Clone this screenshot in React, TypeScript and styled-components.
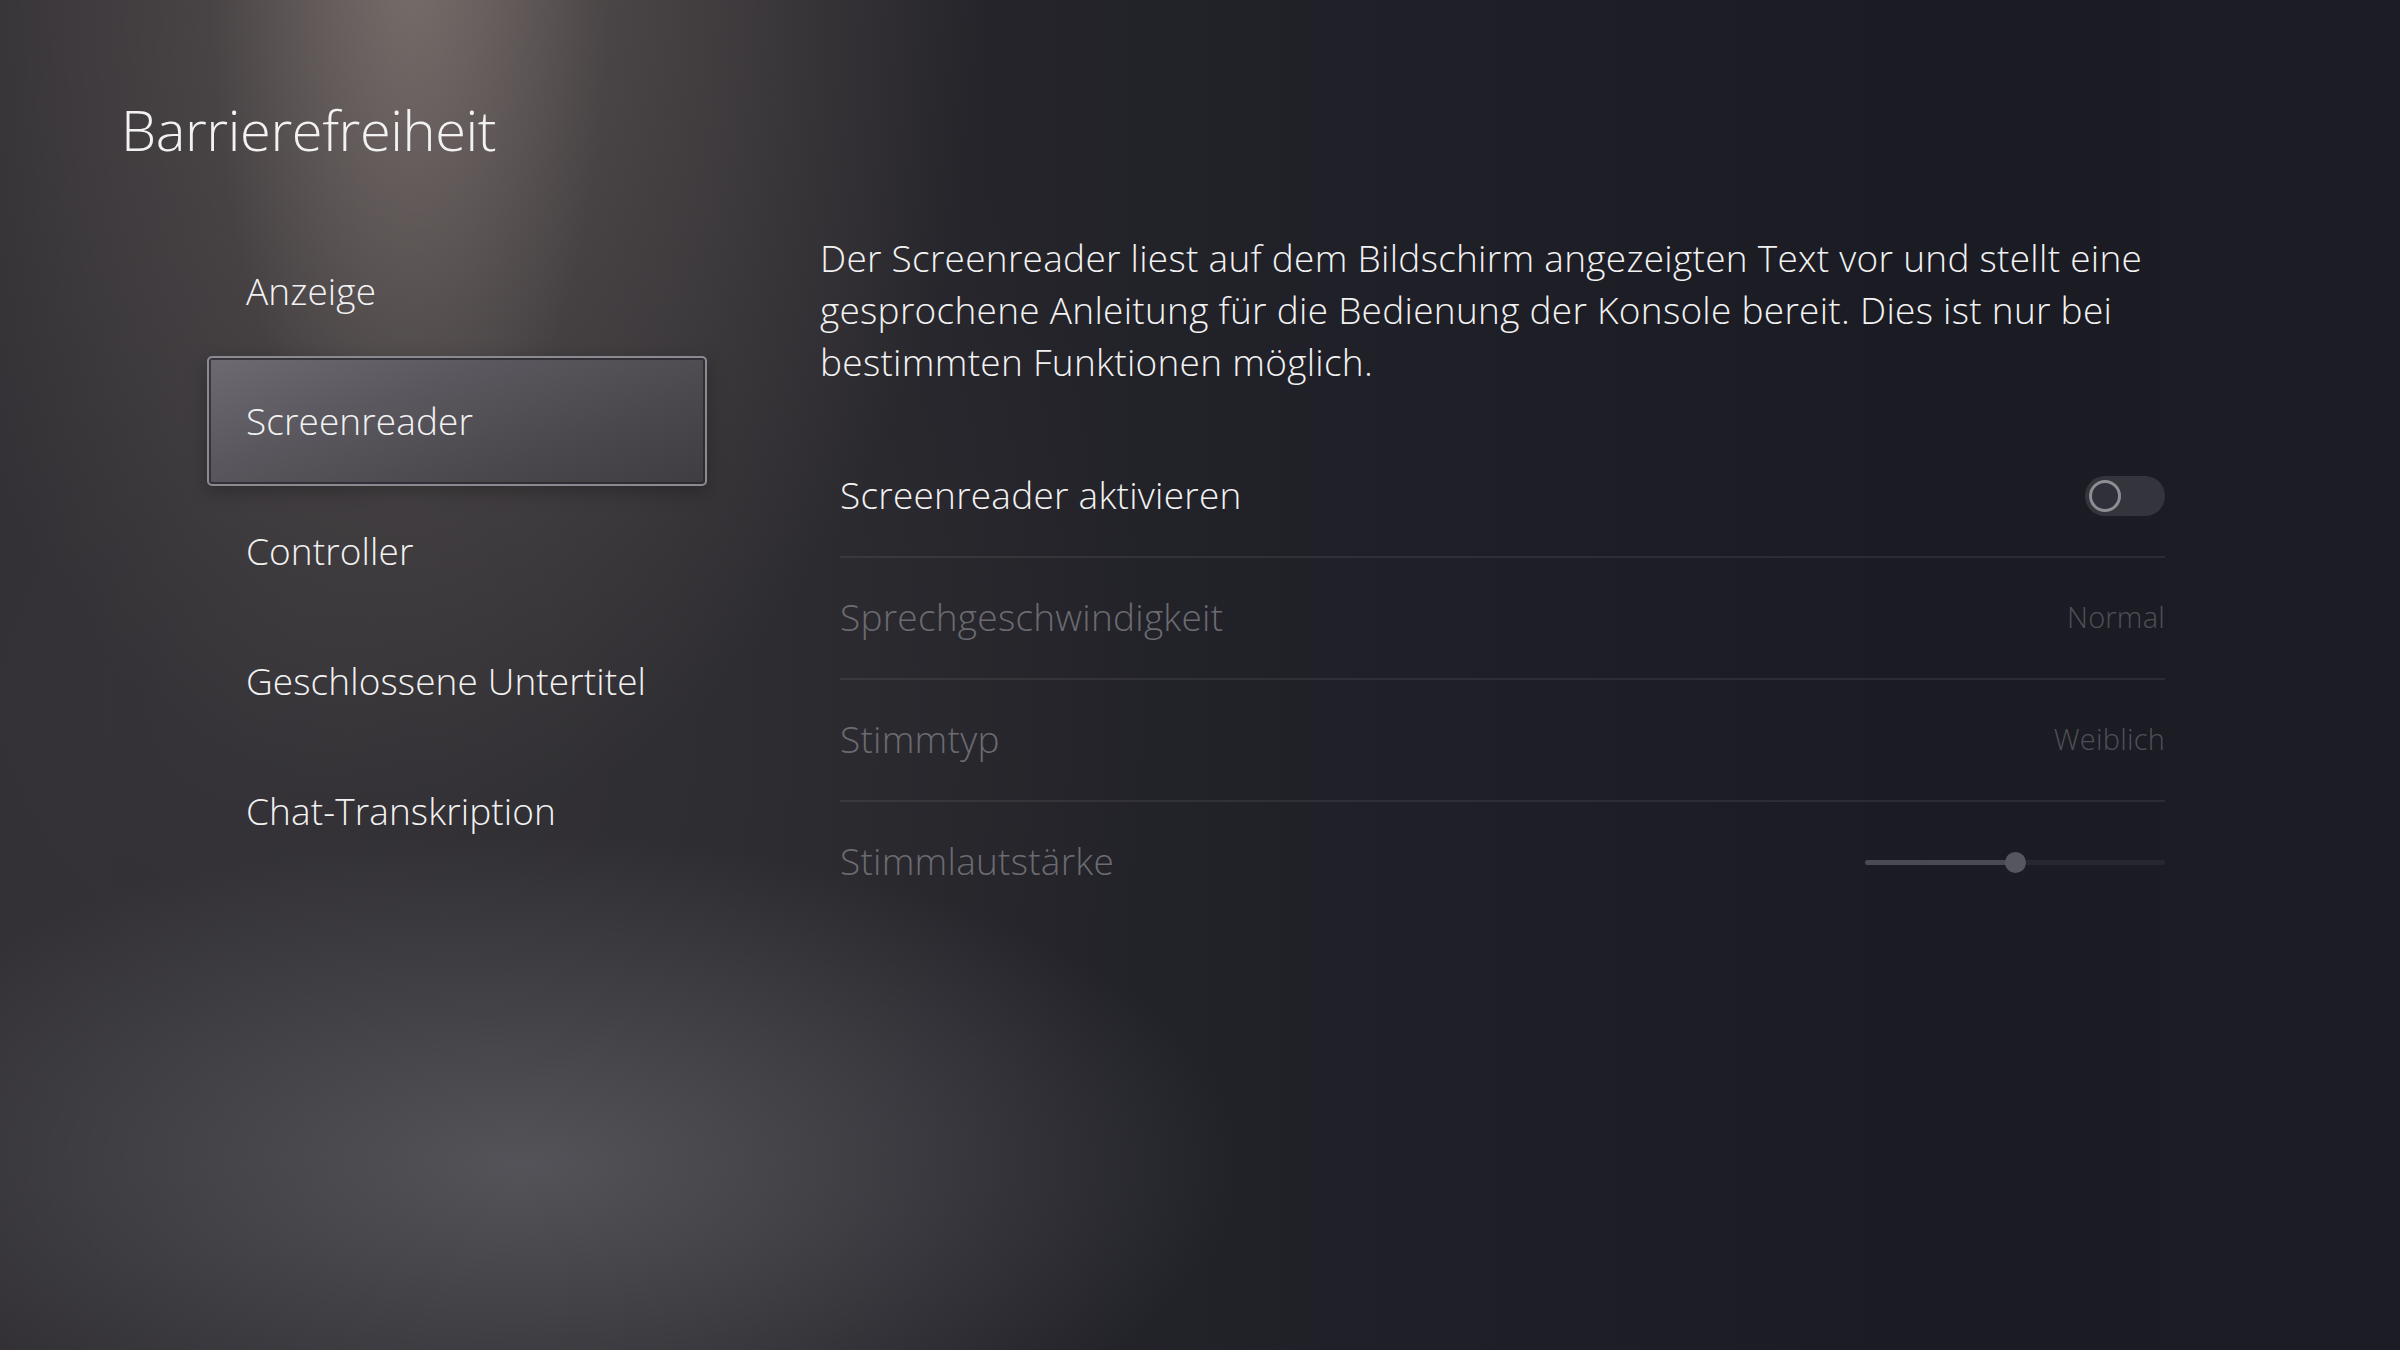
import React from 'react';
import styled, { createGlobalStyle } from 'styled-components';

const GlobalStyle = createGlobalStyle`
  html, body {
    margin: 0;
    padding: 0;
    background: #1c1c24;
  }
  * {
    box-sizing: border-box;
  }
`;

const Page = styled.div`
  width: 2400px;
  height: 1350px;
  overflow: hidden;
  padding-top: 101px;
  font-family: 'Open Sans', 'Noto Sans', sans-serif;
  font-weight: 300;
  color: #f2f2f2;
  background:
    radial-gradient(ellipse 200px 560px at 410px -40px, rgba(150, 138, 132, 0.5), rgba(150, 138, 132, 0) 100%),
    radial-gradient(ellipse 560px 900px at 430px -80px, rgba(120, 108, 104, 0.6), rgba(120, 108, 104, 0) 100%),
    radial-gradient(ellipse 720px 330px at 520px 1165px, rgba(90, 90, 96, 0.85), rgba(90, 90, 96, 0) 100%),
    radial-gradient(ellipse 900px 900px at 250px 700px, rgba(60, 58, 62, 0.6), rgba(60, 58, 62, 0) 100%),
    linear-gradient(90deg, #2d2b30 0%, #29282d 30%, #202028 55%, #1b1b24 80%, #1c1c25 100%);
`;

const Title = styled.h1`
  margin: 0 0 69px 121px;
  font-size: 56px;
  line-height: 56px;
  font-weight: 300;
  letter-spacing: -0.4px;
`;

const Main = styled.div`
  display: flex;
  align-items: flex-start;
  gap: 113px;
  padding-left: 207px;
`;

const Nav = styled.ul`
  list-style: none;
  margin: 0;
  padding: 0;
  width: 500px;
  flex-shrink: 0;
  display: flex;
  flex-direction: column;
`;

const NavItem = styled.li<{ $active?: boolean }>`
  height: 130px;
  display: flex;
  align-items: center;
  padding-left: 37px;
  padding-bottom: 2px;
  font-size: 37px;
  letter-spacing: 0.1px;
  border-radius: 5px;
  border: 2px solid ${(p) => (p.$active ? '#8c8a91' : 'transparent')};
  background: ${(p) =>
    p.$active
      ? 'linear-gradient(160deg, #6d6b71 0%, #5a585e 35%, #4a484d 70%, #3f3d42 100%)'
      : 'transparent'};
  box-shadow: ${(p) =>
    p.$active
      ? 'inset 0 0 0 2px rgba(40, 38, 44, 0.75), 0 6px 18px rgba(0, 0, 0, 0.25)'
      : 'none'};
`;

const Content = styled.div`
  width: 1345px;
  flex-shrink: 0;
  padding-top: 6px;
`;

const Description = styled.p`
  margin: 0 0 48px 0;
  font-size: 37px;
  line-height: 52px;
  letter-spacing: 0.28px;
  white-space: nowrap;
`;

const SettingsList = styled.div`
  margin-left: 20px;
  display: flex;
  flex-direction: column;
`;

const Row = styled.div<{ $last?: boolean }>`
  height: 122px;
  display: flex;
  align-items: center;
  justify-content: space-between;
  border-bottom: 2px solid ${(p) => (p.$last ? 'transparent' : 'rgba(255, 255, 255, 0.07)')};
`;

const Label = styled.span<{ $disabled?: boolean }>`
  font-size: 37px;
  letter-spacing: 0.25px;
  margin-top: -3px;
  color: ${(p) => (p.$disabled ? '#6b6b71' : '#f2f2f2')};
`;

const Value = styled.span`
  font-size: 29px;
  letter-spacing: 0.2px;
  margin-top: -3px;
  color: #4f5057;
`;

const Toggle = styled.div`
  width: 80px;
  height: 40px;
  border-radius: 20px;
  background: #34343d;
  display: flex;
  align-items: center;
  padding-left: 4px;
`;

const Knob = styled.div`
  width: 32px;
  height: 32px;
  border-radius: 50%;
  border: 3px solid #8d8d93;
  background: #30303a;
`;

const Slider = styled.div`
  position: relative;
  width: 300px;
  height: 5px;
  border-radius: 3px;
  background: #27272f;
`;

const SliderFill = styled.div`
  height: 100%;
  border-radius: 3px;
  background: #4a4b52;
`;

const SliderThumb = styled.div`
  position: absolute;
  top: 50%;
  width: 21px;
  height: 21px;
  margin-left: -10px;
  margin-top: -10px;
  border-radius: 50%;
  background: #56575e;
`;

const navItems = ['Anzeige', 'Screenreader', 'Controller', 'Geschlossene Untertitel', 'Chat-Transkription'];

const volume = 50;

export default function App() {
  return (
    <>
      <GlobalStyle />
      <Page>
        <Title>Barrierefreiheit</Title>
        <Main>
          <Nav>
            {navItems.map((item) => (
              <NavItem key={item} $active={item === 'Screenreader'}>
                {item}
              </NavItem>
            ))}
          </Nav>
          <Content>
            <Description>
              Der Screenreader liest auf dem Bildschirm angezeigten Text vor und stellt eine
              <br />
              gesprochene Anleitung für die Bedienung der Konsole bereit. Dies ist nur bei
              <br />
              bestimmten Funktionen möglich.
            </Description>
            <SettingsList>
              <Row>
                <Label>Screenreader aktivieren</Label>
                <Toggle>
                  <Knob />
                </Toggle>
              </Row>
              <Row>
                <Label $disabled>Sprechgeschwindigkeit</Label>
                <Value>Normal</Value>
              </Row>
              <Row>
                <Label $disabled>Stimmtyp</Label>
                <Value>Weiblich</Value>
              </Row>
              <Row $last>
                <Label $disabled>Stimmlautstärke</Label>
                <Slider>
                  <SliderFill style={{ width: `${volume}%` }} />
                  <SliderThumb style={{ left: `${volume}%` }} />
                </Slider>
              </Row>
            </SettingsList>
          </Content>
        </Main>
      </Page>
    </>
  );
}
